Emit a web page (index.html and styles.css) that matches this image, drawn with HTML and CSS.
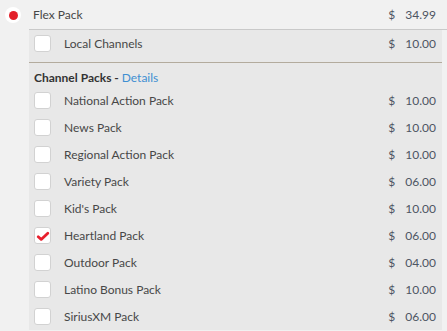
FILE: index.html
```html
<!DOCTYPE html>
<html>
<head>
<meta charset="utf-8">
<link rel="stylesheet" href="styles.css">
</head>
<body>
<div class="pkg">
  <div class="pkg-head">
    <span class="radio"><span class="radio-dot"></span></span>
    <span class="label">Flex Pack</span>
    <span class="price"><span class="cur">$</span><span class="amt">34.99</span></span>
  </div>
  <div class="pkg-body">
  <div class="panel">
    <div class="row row-local">
      <span class="check"></span>
      <span class="label">Local Channels</span>
      <span class="price"><span class="cur">$</span><span class="amt">10.00</span></span>
    </div>
    <div class="section">
      <div class="section-title">Channel Packs - <a class="details">Details</a></div>
      <div class="row"><span class="check"></span><span class="label">National Action Pack</span><span class="price"><span class="cur">$</span><span class="amt">10.00</span></span></div>
      <div class="row"><span class="check"></span><span class="label">News Pack</span><span class="price"><span class="cur">$</span><span class="amt">10.00</span></span></div>
      <div class="row"><span class="check"></span><span class="label">Regional Action Pack</span><span class="price"><span class="cur">$</span><span class="amt">10.00</span></span></div>
      <div class="row"><span class="check"></span><span class="label">Variety Pack</span><span class="price"><span class="cur">$</span><span class="amt">06.00</span></span></div>
      <div class="row"><span class="check"></span><span class="label">Kid's Pack</span><span class="price"><span class="cur">$</span><span class="amt">10.00</span></span></div>
      <div class="row"><span class="check checked"><svg width="14" height="14" viewBox="0 0 14 14"><path d="M2.2 7.8 L5.2 10.4 L11.8 4.2" fill="none" stroke="#e8202e" stroke-width="2.8" stroke-linecap="round" stroke-linejoin="round"/></svg></span><span class="label">Heartland Pack</span><span class="price"><span class="cur">$</span><span class="amt">06.00</span></span></div>
      <div class="row"><span class="check"></span><span class="label">Outdoor Pack</span><span class="price"><span class="cur">$</span><span class="amt">04.00</span></span></div>
      <div class="row"><span class="check"></span><span class="label">Latino Bonus Pack</span><span class="price"><span class="cur">$</span><span class="amt">10.00</span></span></div>
      <div class="row"><span class="check"></span><span class="label">SiriusXM Pack</span><span class="price"><span class="cur">$</span><span class="amt">06.00</span></span></div>
    </div>
  </div>
  </div>
</div>
</body>
</html>
```

FILE: styles.css
```css
html, body {
  margin: 0;
  padding: 0;
  background: #f1f1f1;
  font-family: Lato, "Open Sans", sans-serif;
  font-size: 12px;
  color: #474747;
  overflow: hidden;
}
.pkg-head {
  display: flex;
  align-items: center;
  height: 29px;
  padding: 0 11px 0 5px;
}
.radio {
  width: 16px;
  height: 16px;
  border-radius: 50%;
  background: #fff;
  display: flex;
  align-items: center;
  justify-content: center;
  margin-right: 12px;
  margin-top: 1px;
}
.radio-dot {
  width: 9px;
  height: 9px;
  border-radius: 50%;
  background: #e3212b;
}
.label {
  flex: 1;
}
.price {
  display: flex;
  gap: 10px;
  color: #4d5563;
}
.pkg-body {
  margin-left: 29px;
  border-top: 1px solid #c9c9c9;
}
.panel {
  margin-right: 5px;
  background: #e8e8e8;
}
.row {
  display: flex;
  align-items: center;
  height: 27px;
  padding: 0 6px 0 5px;
}
.row-local {
  height: 26px;
  margin-bottom: 6px;
}
.row-local + .section {
  border-top: 1px solid #b3ab9d;
}
.check {
  width: 15px;
  height: 15px;
  border: 1px solid #d2d2d2;
  border-radius: 3px;
  background: #fff;
  margin-right: 13px;
  display: flex;
  align-items: center;
  justify-content: center;
  box-sizing: content-box;
}
.section-title {
  height: 24px;
  padding: 7px 5px 0 5px;
  box-sizing: border-box;
  color: #333;
  font-weight: 700;
}
.details {
  color: #3f8fd2;
  font-weight: 400;
}
```
